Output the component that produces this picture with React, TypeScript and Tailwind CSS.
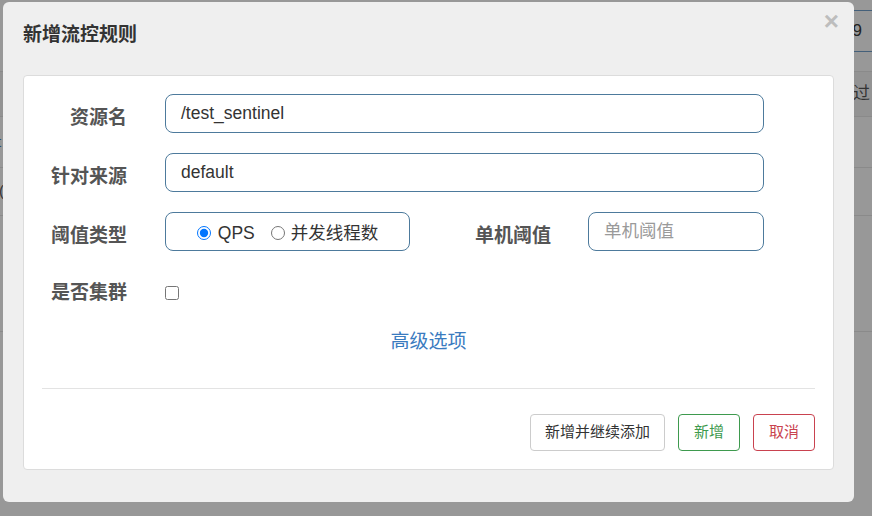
import React from "react";

const font = "font-['Liberation_Sans','Noto_Sans_CJK_SC',sans-serif]";

function Label({ children, w = "w-[103px]", shift = true }: { children: React.ReactNode; w?: string; shift?: boolean }) {
  return (
    <div className={`${w} ${shift ? "mt-[8px]" : ""} shrink-0 text-right text-[19px] font-bold text-[#555] leading-[26px]`}>
      {children}
    </div>
  );
}

export default function App() {
  return (
    <div className={`relative w-[872px] h-[516px] overflow-hidden bg-[#989898] ${font}`}>
      {/* background page (dimmed) */}
      <div className="flex flex-col w-full">
        <div className="h-[72px] border-b border-[#8a8a8a] flex justify-end pt-[10px]">
          <div className="w-[30px] h-[42px] border-y border-[#44607a] flex items-center text-[17px] text-[#222] pl-[1px]">
            09
          </div>
        </div>
        <div className="h-[45px] border-b border-[#8a8a8a] bg-[#939393] flex justify-end items-center pr-[2px] text-[17px] text-[#333]">
          过
        </div>
        <div className="h-[51px] border-b border-[#8a8a8a] flex items-center text-[15px] text-[#2a4f73] -ml-[3px]">
          t
        </div>
        <div className="h-[48px] border-b border-[#8a8a8a] flex items-center text-[15px] text-[#333] -ml-[1px]">
          (
        </div>
        <div className="h-[116px] border-b border-[#8a8a8a]"></div>
      </div>

      {/* modal */}
      <div className="absolute left-[3px] top-[2px] w-[851px] h-[500px] rounded-[6px] bg-[#efefef] flex flex-col">
        <div className="h-[73px] shrink-0 pl-[20px] pr-[15px] pt-[20px] flex justify-between">
          <div className="text-[19px] font-bold text-[#333] leading-[26px]">新增流控规则</div>
          <div className="text-[26px] font-bold text-[#bdbdbd] leading-[26px] -mt-[14px]">×</div>
        </div>
        <div className="mx-[20px] h-[395px] border border-[#dcdcdc] rounded-[4px] bg-white flex flex-col">
          <div className="pt-[18px] flex flex-col gap-[20px] pr-[69px]">
            <div className="flex items-center">
              <Label>资源名</Label>
              <div className="ml-[38px] flex-1 h-[39px] border border-[#4d7a9c] rounded-[8px] flex items-center px-[15px] text-[17.5px] text-[#333]">
                /test_sentinel
              </div>
            </div>
            <div className="flex items-center">
              <Label>针对来源</Label>
              <div className="ml-[38px] flex-1 h-[39px] border border-[#4d7a9c] rounded-[8px] flex items-center px-[15px] text-[17.5px] text-[#333]">
                default
              </div>
            </div>
            <div className="flex items-center">
              <Label>阈值类型</Label>
              <div className="ml-[38px] w-[245px] h-[39px] border border-[#4d7a9c] rounded-[8px] flex items-center justify-center text-[17.5px] text-[#333] pt-[3px]">
                <label className="flex items-center">
                  <input type="radio" name="t" defaultChecked className="w-[14px] h-[14px] m-0 accent-[#0075ff]" />
                  <span className="ml-[7px]">QPS</span>
                </label>
                <label className="flex items-center ml-[16px]">
                  <input type="radio" name="t" className="w-[14px] h-[14px] m-0" />
                  <span className="ml-[6px]">并发线程数</span>
                </label>
              </div>
              <Label w="w-[141px]">单机阈值</Label>
              <div className="ml-[37px] flex-1 h-[39px] border border-[#4d7a9c] rounded-[8px] flex items-center px-[15px] text-[17.5px] text-[#9a9a9a]">
                单机阈值
              </div>
            </div>
            <div className="flex items-center h-[41px] pt-[2px]">
              <Label shift={false}>是否集群</Label>
              <div className="ml-[38px] flex items-center">
                <input type="checkbox" className="w-[14px] h-[14px] m-0" />
              </div>
            </div>
          </div>
          <div className="mt-[17px] flex justify-center text-[19px] text-[#3a7bbf] leading-[26px]">高级选项</div>
          <div className="mx-[18px] mt-[33px] border-t border-[#e3e3e3]"></div>
          <div className="flex justify-end gap-[13px] pr-[18px] pt-[25px]">
            <div className="h-[37px] px-[14px] border border-[#cccccc] rounded-[4px] flex items-center text-[15px] text-[#333]">
              新增并继续添加
            </div>
            <div className="h-[37px] w-[62px] border border-[#3e9a4e] rounded-[4px] flex items-center justify-center text-[15px] text-[#3e9a4e]">
              新增
            </div>
            <div className="h-[37px] w-[62px] border border-[#c9424f] rounded-[4px] flex items-center justify-center text-[15px] text-[#c9424f]">
              取消
            </div>
          </div>
        </div>
      </div>
    </div>
  );
}
